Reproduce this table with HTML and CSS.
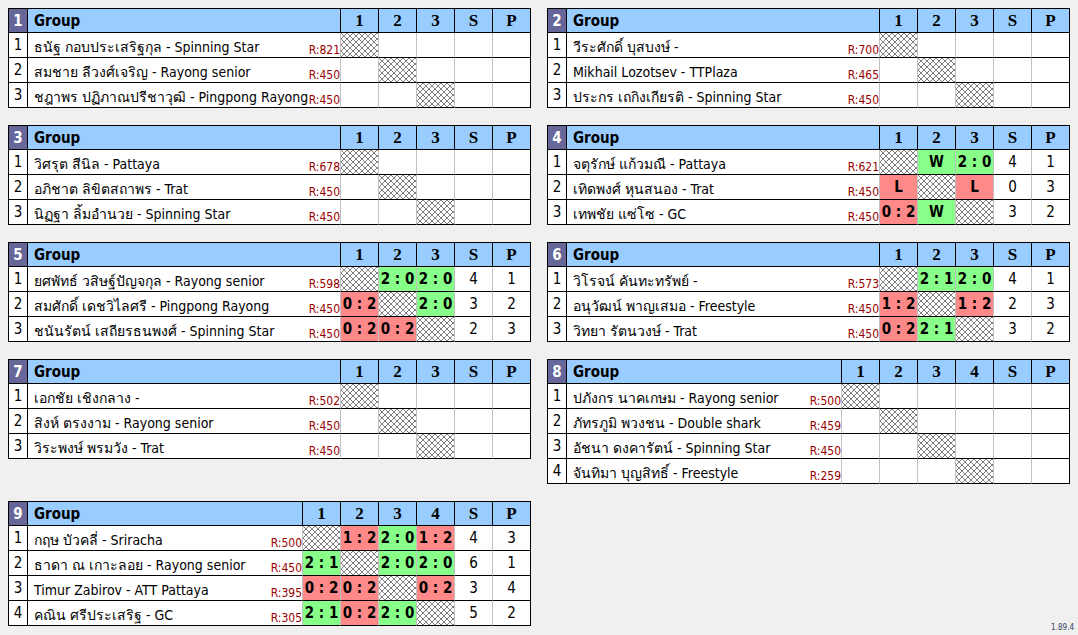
FILE: index.html
```html
<!DOCTYPE html>
<html lang="th">

<head>
    <meta charset="UTF-8">
    <meta name="viewport" content="width=device-width, initial-scale=1.0">
    <title>Group</title>
    <link rel="stylesheet" href="styles.css">
</head>

<body>
    <div class="board">
        <div class="version">1.89.4</div>
    </div>

    <script>
        const board = document.querySelector('.board')
        const version = document.querySelector('.version')

        const groups = [
            { players: [['ธนัฐ กอบประเสริฐกุล - Spinning Star', 821], ['สมชาย ลีวงศ์เจริญ - Rayong senior', 450], ['ชฎาพร ปฏิภาณปรีชาวุฒิ - Pingpong Rayong', 450]] },
            { players: [['วีระศักดิ์ บุสบงษ์ -', 700], ['Mikhail Lozotsev - TTPlaza', 465], ['ประกร  เถกิงเกียรติ - Spinning Star', 450]] },
            { players: [['วิศรุต สีนิล - Pattaya', 678], ['อภิชาต ลิขิตสถาพร - Trat', 450], ['นิฏฐา ลิ้มอำนวย - Spinning Star', 450]] },
            {
                players: [['จตุรักษ์ แก้วมณี - Pattaya', 621], ['เทิดพงศ์ หุนสนอง - Trat', 450], ['เทพชัย แซ่โซ - GC', 450]],
                results: [['x', '+W', '+2:0'], ['-L', 'x', '-L'], ['-0:2', '+W', 'x']],
                s: [4, 0, 3], p: [1, 3, 2]
            },
            {
                players: [['ยศพัทธ์ วสิษฐ์ปัญจกุล - Rayong senior', 598], ['สมศักดิ์ เดชวิไลศรี - Pingpong Rayong', 450], ['ชนันรัตน์ เสถียรธนพงศ์ - Spinning Star', 450]],
                results: [['x', '+2:0', '+2:0'], ['-0:2', 'x', '+2:0'], ['-0:2', '-0:2', 'x']],
                s: [4, 3, 2], p: [1, 2, 3]
            },
            {
                players: [['วิโรจน์ คันทะทรัพย์ -', 573], ['อนุวัฒน์ พาญเสมอ - Freestyle', 450], ['วิทยา รัตนวงษ์ - Trat', 450]],
                results: [['x', '+2:1', '+2:0'], ['-1:2', 'x', '-1:2'], ['-0:2', '+2:1', 'x']],
                s: [4, 2, 3], p: [1, 3, 2]
            },
            { players: [['เอกชัย เชิงกลาง -', 502], ['สิงห์ ตรงงาม - Rayong senior', 450], ['วิระพงษ์ พรมวัง - Trat', 450]] },
            { players: [['ปภังกร นาคเกษม - Rayong senior', 500], ['ภัทรภูมิ พวงชน - Double shark', 459], ['อัชนา ดงคารัตน์ - Spinning Star', 450], ['จันทิมา บุญสิทธิ์ - Freestyle', 259]] },
            {
                players: [['กฤษ บัวคลี่ - Sriracha', 500], ['ธาดา ณ เกาะลอย - Rayong senior', 450], ['Timur Zabirov - ATT Pattaya', 395], ['คณิน ศรีประเสริฐ - GC', 305]],
                results: [['x', '-1:2', '+2:0', '-1:2'], ['+2:1', 'x', '+2:0', '+2:0'], ['-0:2', '-0:2', 'x', '-0:2'], ['+2:1', '-0:2', '+2:0', 'x']],
                s: [4, 6, 3, 5], p: [3, 1, 4, 2]
            }
        ]

        function cell(v) {
            if (v === 'x') return '<td class="score self"></td>'
            if (!v) return '<td class="score"></td>'
            const cls = v[0] === '+' ? 'win' : 'loss'
            return `<td class="score ${cls}">${v.slice(1).replace(':', ' : ')}</td>`
        }

        groups.forEach(function (g, i) {
            const n = g.players.length
            let html = `<tr><th class="num">${i + 1}</th><th class="title">Group</th>`
            for (let k = 1; k <= n; k++) {
                html += `<th class="col">${k}</th>`
            }
            html += '<th class="col">S</th><th class="col">P</th></tr>'

            g.players.forEach(function (p, r) {
                html += `<tr><td class="num">${r + 1}</td>
                    <td class="player"><div class="player-box">
                        <span class="name">${p[0]}</span><span class="rating">R:${p[1]}</span>
                    </div></td>`
                for (let c = 0; c < n; c++) {
                    const v = g.results ? g.results[r][c] : (r === c ? 'x' : '')
                    html += cell(v)
                }
                html += `<td class="score">${g.s ? g.s[r] : ''}</td><td class="score">${g.p ? g.p[r] : ''}</td></tr>`
            })

            const table = document.createElement('table')
            table.classList.add('group')
            table.innerHTML = html
            board.insertBefore(table, version)
        })
    </script>
</body>

</html>
```

FILE: styles.css
```css
* {
    margin: 0;
    padding: 0;
    box-sizing: border-box;
}

body {
    padding: 8px;
    background-color: #f0f0f0;
    color: #000;
    font-family: "DejaVu Sans Condensed", "DejaVu Sans", sans-serif;
    font-stretch: condensed;
}

.board {
    display: grid;
    grid-template-columns: 523px 523px;
    column-gap: 16px;
    row-gap: 17px;
    align-items: start;
}

.group {
    width: 523px;
    table-layout: fixed;
    border-collapse: separate;
    border-spacing: 0;
    background-color: #fff;
    border-left: 1px solid #000;
    border-top: 1px solid #000;
}

.group th,
.group td {
    padding: 0;
    border-right: 1px solid #000;
    border-bottom: 1px solid #000;
}

.group th {
    height: 24px;
    background-color: #99ccff;
}

.group td {
    height: 25px;
}

th.num {
    width: 19px;
    background-color: #666699;
    color: #fff;
    font-size: 15px;
    font-weight: bold;
}

th.title {
    padding-left: 6px;
    text-align: left;
    font-size: 15px;
    font-weight: bold;
}

th.col {
    width: 38px;
    font-family: "Liberation Serif", serif;
    font-size: 17px;
    font-weight: bold;
}

td.num {
    text-align: center;
    font-size: 15px;
}

td.player {
    border-right-color: #c0c0c0;
}

.player-box {
    display: flex;
    align-items: flex-end;
    height: 24px;
}

.name {
    flex: 1;
    min-width: 0;
    overflow: hidden;
    white-space: nowrap;
    padding-left: 6px;
    font-size: 14px;
    line-height: 20px;
}

.rating {
    font-size: 12px;
    line-height: 14px;
    color: #990000;
}

td.score {
    border-right-color: #c0c0c0;
    text-align: center;
    font-size: 15px;
}

td.score:last-child {
    border-right-color: #000;
}

td.win,
td.loss {
    font-size: 15px;
    font-weight: bold;
    white-space: nowrap;
    overflow: hidden;
}

td.win {
    background-color: #88ff88;
}

td.loss {
    background-color: #ff8888;
}

td.self {
    background: #fff url("data:image/svg+xml,%3Csvg xmlns='http://www.w3.org/2000/svg' width='6' height='6'%3E%3Cpath d='M0 0L6 6M6 0L0 6' stroke='%23808080' stroke-width='1'/%3E%3C/svg%3E");
}

.version {
    grid-column: 2;
    align-self: end;
    justify-self: end;
    margin: 0 -4px -6px 0;
    font-size: 8px;
    color: #334466;
}
```
